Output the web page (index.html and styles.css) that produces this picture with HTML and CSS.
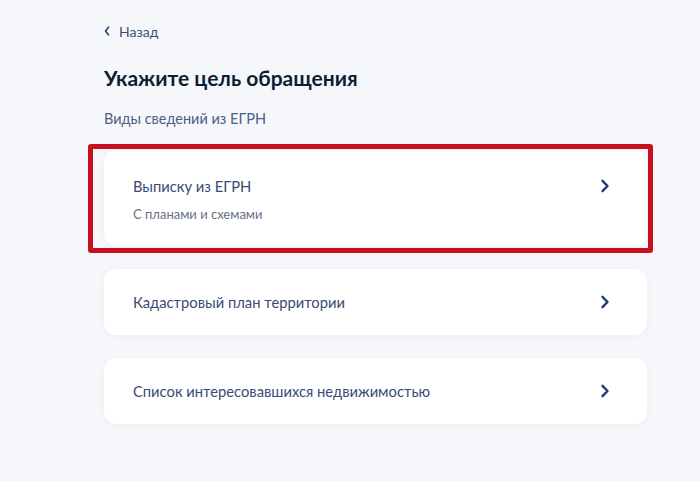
FILE: index.html
```html
<!DOCTYPE html>
<html lang="ru">
<head>
  <meta charset="UTF-8">
  <meta name="viewport" content="width=device-width, initial-scale=1.0">
  <title>Виды сведений из ЕГРН</title>
  <link rel="stylesheet" href="styles.css">
</head>
<body>
  <div class="container">
    <a class="back" href="#">
      <svg class="back-icon" width="6" height="10" viewBox="0 0 6 10"><path d="M4.5 1.2 L1.5 5 L4.5 8.8" fill="none" stroke="currentColor" stroke-width="1.6" stroke-linecap="round" stroke-linejoin="round"/></svg>
      <span>Назад</span>
    </a>

    <h1>Укажите цель обращения</h1>
    <p class="description">Виды сведений из ЕГРН</p>

    <div class="options">
      <a class="option highlighted" href="#">
        <div class="option-text">
          <div class="option-title">Выписку из ЕГРН</div>
          <div class="option-sub">С планами и схемами</div>
        </div>
        <span class="chevron">
          <svg width="10" height="14" viewBox="0 0 10 14"><path d="M2.5 1.8 L7.5 7 L2.5 12.2" fill="none" stroke="currentColor" stroke-width="2.4" stroke-linecap="round" stroke-linejoin="round"/></svg>
        </span>
      </a>

      <a class="option" href="#">
        <div class="option-text">
          <div class="option-title">Кадастровый план территории</div>
        </div>
        <span class="chevron">
          <svg width="10" height="14" viewBox="0 0 10 14"><path d="M2.5 1.8 L7.5 7 L2.5 12.2" fill="none" stroke="currentColor" stroke-width="2.4" stroke-linecap="round" stroke-linejoin="round"/></svg>
        </span>
      </a>

      <a class="option" href="#">
        <div class="option-text">
          <div class="option-title">Список интересовавшихся недвижимостью</div>
        </div>
        <span class="chevron">
          <svg width="10" height="14" viewBox="0 0 10 14"><path d="M2.5 1.8 L7.5 7 L2.5 12.2" fill="none" stroke="currentColor" stroke-width="2.4" stroke-linecap="round" stroke-linejoin="round"/></svg>
        </span>
      </a>
    </div>
  </div>
</body>
</html>
```

FILE: styles.css
```css
:root {
  --bg: #f6f7fb;
  --dark: #0b1f33;
  --text: #3a4a75;
  --muted: #66727f;
  --accent: #243a6e;
  --mark: #c8101e;
}

* {
  box-sizing: border-box;
  margin: 0;
  padding: 0;
}

body {
  font-family: Lato, 'Noto Sans', sans-serif;
  background-color: var(--bg);
  color: var(--dark);
  height: 481px;
  overflow: hidden;
}

.container {
  width: 543px;
  margin-left: 104px;
  padding-top: 21px;
}

.back {
  display: flex;
  align-items: center;
  gap: 9px;
  height: 20px;
  font-size: 14px;
  color: #3c4c7c;
  text-decoration: none;
}

.back-icon {
  color: #2b3f74;
}

h1 {
  margin-top: 23px;
  font-size: 21px;
  line-height: 28px;
  font-weight: 700;
  color: var(--dark);
}

.description {
  margin-top: 17px;
  font-size: 14.5px;
  line-height: 20px;
  color: #4f5e85;
}

.options {
  margin-top: 21px;
  display: flex;
  flex-direction: column;
  gap: 23px;
}

.option {
  position: relative;
  display: flex;
  align-items: flex-start;
  justify-content: space-between;
  padding: 23px 37px 23px 29px;
  background: white;
  border-radius: 12px;
  box-shadow: 0 1px 6px rgba(40, 60, 110, 0.06);
  text-decoration: none;
}

.option.highlighted {
  padding-top: 26px;
  padding-bottom: 24px;
}

.option.highlighted::after {
  content: "";
  position: absolute;
  top: -6px;
  left: -16px;
  right: -6px;
  bottom: -7px;
  border: 5px solid var(--mark);
  border-radius: 3px;
}

.option-title {
  font-size: 14.75px;
  line-height: 20px;
  color: var(--text);
}

.option-sub {
  margin-top: 10px;
  font-size: 13px;
  line-height: 16px;
  color: var(--muted);
}

.chevron {
  display: flex;
  align-items: center;
  height: 20px;
  color: var(--accent);
}
```
